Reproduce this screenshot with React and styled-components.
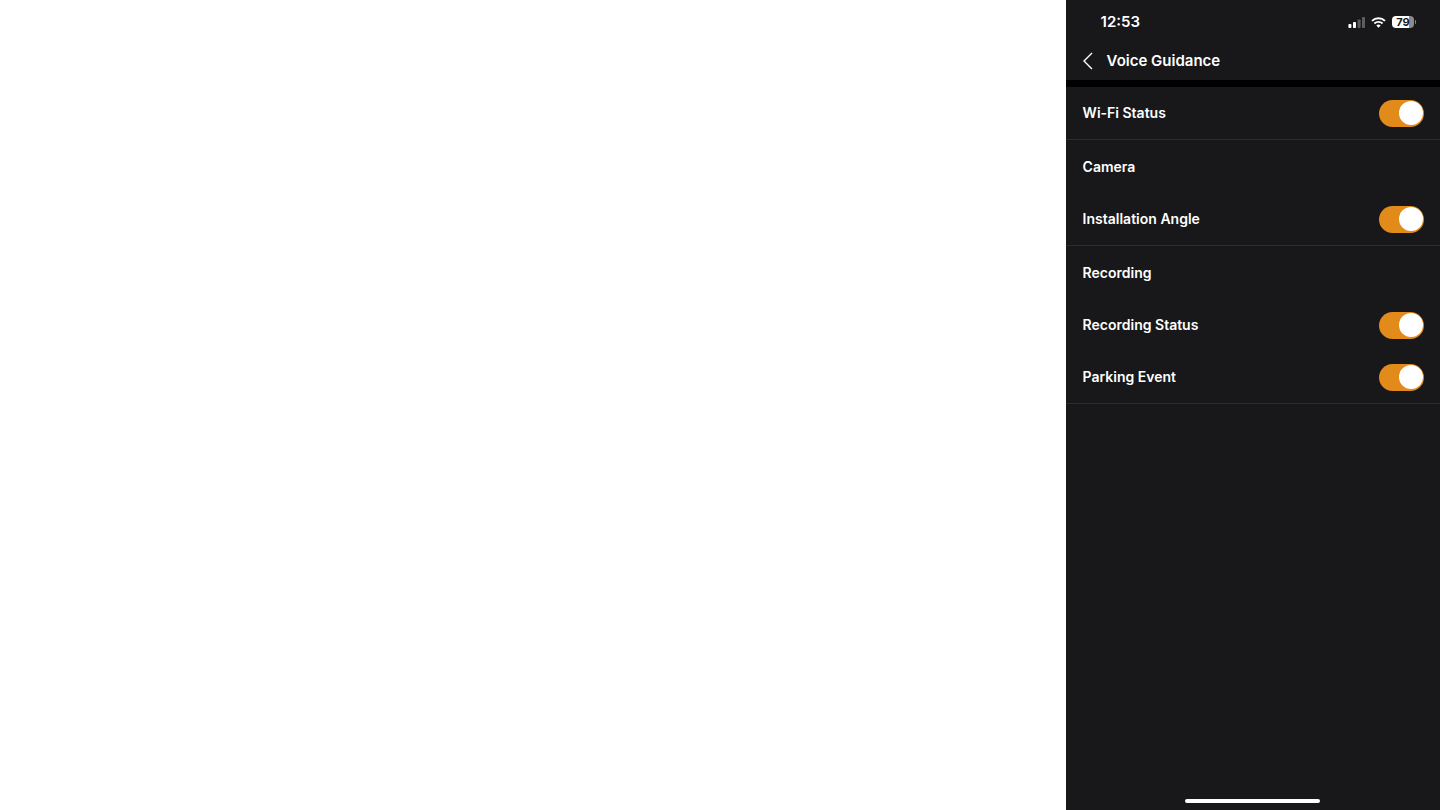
//3rd party
import React, { useState } from 'react';
import styled, { createGlobalStyle } from 'styled-components';

const GlobalStyle = createGlobalStyle`
  * {
    box-sizing: border-box;
  }

  body {
    margin: 0;
    background: #fff;
    font-family: Inter, 'Liberation Sans', sans-serif;
  }
`;

const Page = styled.div`
  display: flex;
  justify-content: flex-end;
  min-height: 100vh;
`;

const Phone = styled.main`
  display: flex;
  flex-direction: column;
  width: 26%;
  min-width: 320px;
  background: #18181a;
  color: #fff;
`;

const StatusBar = styled.div`
  display: flex;
  align-items: center;
  justify-content: space-between;
  height: 44px;
  padding: 0 24px 0 35px;
`;

const Clock = styled.time`
  font-size: 15px;
  font-weight: 600;
  line-height: 20px;
`;

const StatusIcons = styled.div`
  display: flex;
  align-items: center;
  gap: 6px;

  svg {
    display: block;
  }
`;

const Battery = styled.div`
  display: flex;
  align-items: center;
  gap: 1px;
`;

const BatteryLevel = styled.span`
  width: 22px;
  height: 12px;
  border-radius: 4px;
  background: linear-gradient(to right, #fff 79%, #8b8b8d 79%);
  color: #18181a;
  font-size: 11px;
  font-weight: 700;
  line-height: 12px;
  text-align: center;
`;

const BatteryTip = styled.span`
  width: 1px;
  height: 4px;
  border-radius: 0 1px 1px 0;
  background: #8b8b8d;
`;

const HeaderView = styled.header`
  display: flex;
  align-items: center;
  gap: 13px;
  height: 36px;
  padding: 0 17px 3px;
`;

const BackBtn = styled.button`
  padding: 0;
  border: none;
  background: transparent;
  color: inherit;
  cursor: pointer;

  svg {
    display: block;
  }
`;

const HeaderText = styled.h1`
  margin: 0;
  font-size: 15px;
  font-weight: 600;
  line-height: 20px;
`;

const Section = styled.section`
  border-bottom: 1px solid #2c2c2e;
`;

const Settings = styled.div`
  flex: 1;
  border-top: 7px solid #000;
`;

const Row = styled.div`
  display: flex;
  align-items: center;
  justify-content: space-between;
  height: ${(props) => (props.$heading ? '53px' : '52px')};
  padding: 0 16px 0 17px;
`;

const RowTitle = styled.h2`
  margin: 0;
  font-size: 14px;
  font-weight: 600;
  line-height: 20px;
`;

const RowLabel = styled.label`
  font-size: 14px;
  font-weight: 600;
  line-height: 20px;
`;

const Switch = styled.input`
  appearance: none;
  display: flex;
  align-items: center;
  width: 45px;
  height: 27px;
  margin: 0;
  padding: 0 1px;
  border-radius: 14px;
  background: #3a3a3c;
  cursor: pointer;

  &::before {
    content: '';
    width: 24px;
    height: 24px;
    border-radius: 50%;
    background: #fff;
  }

  &:checked {
    justify-content: flex-end;
    background: #e28b1b;
  }
`;

const HomeBar = styled.div`
  align-self: center;
  width: 36%;
  height: 4px;
  margin-bottom: 7px;
  border-radius: 2px;
  background: #fff;
`;

const sections = [
  { rows: [{ id: 'wifi', label: 'Wi-Fi Status' }] },
  {
    title: 'Camera',
    rows: [{ id: 'angle', label: 'Installation Angle' }],
  },
  {
    title: 'Recording',
    rows: [
      { id: 'recording', label: 'Recording Status' },
      { id: 'parking', label: 'Parking Event' },
    ],
  },
];

const SignalIcon = () => (
  <svg width="17" height="11" viewBox="0 0 17 11" fill="#fff">
    <rect x="0.4" y="7" width="3" height="4" rx="0.8" />
    <rect x="5" y="5" width="3" height="6" rx="0.8" />
    <rect x="9.6" y="2.5" width="3" height="8.5" rx="0.8" opacity="0.3" />
    <rect x="14" y="0" width="3" height="11" rx="0.8" opacity="0.3" />
  </svg>
);

const WifiIcon = () => (
  <svg width="15" height="11" viewBox="0 0 15 11" fill="none" stroke="#fff">
    <path d="M1 3.9a9.3 9.3 0 0 1 13 0" strokeWidth="2" />
    <path d="M3.4 6.5a5.9 5.9 0 0 1 8.2 0" strokeWidth="1.9" />
    <path d="M7.5 10.8 5.3 8.6a3.2 3.2 0 0 1 4.4 0z" fill="#fff" stroke="none" />
  </svg>
);

const BackIcon = () => (
  <svg
    width="11"
    height="18"
    viewBox="0 0 11 18"
    fill="none"
    stroke="currentColor"
    strokeWidth="1.4"
  >
    <path d="M9 1 1 9l8 8" />
  </svg>
);

const App = () => {
  const [settings, setSettings] = useState({
    wifi: true,
    angle: true,
    recording: true,
    parking: true,
  });

  const toggle = (id) => setSettings({ ...settings, [id]: !settings[id] });

  return (
    <Page>
      <GlobalStyle />
      <Phone>
        <StatusBar>
          <Clock>12:53</Clock>
          <StatusIcons>
            <SignalIcon />
            <WifiIcon />
            <Battery>
              <BatteryLevel>79</BatteryLevel>
              <BatteryTip />
            </Battery>
          </StatusIcons>
        </StatusBar>
        <HeaderView>
          <BackBtn type="button" aria-label="Back">
            <BackIcon />
          </BackBtn>
          <HeaderText>Voice Guidance</HeaderText>
        </HeaderView>
        <Settings>
          {sections.map(({ title, rows }) => (
            <Section key={rows[0].id}>
              {title && (
                <Row $heading>
                  <RowTitle>{title}</RowTitle>
                </Row>
              )}
              {rows.map(({ id, label }) => (
                <Row key={id}>
                  <RowLabel htmlFor={id}>{label}</RowLabel>
                  <Switch
                    id={id}
                    type="checkbox"
                    role="switch"
                    checked={settings[id]}
                    onChange={() => toggle(id)}
                  />
                </Row>
              ))}
            </Section>
          ))}
        </Settings>
        <HomeBar />
      </Phone>
    </Page>
  );
};
export default App;
